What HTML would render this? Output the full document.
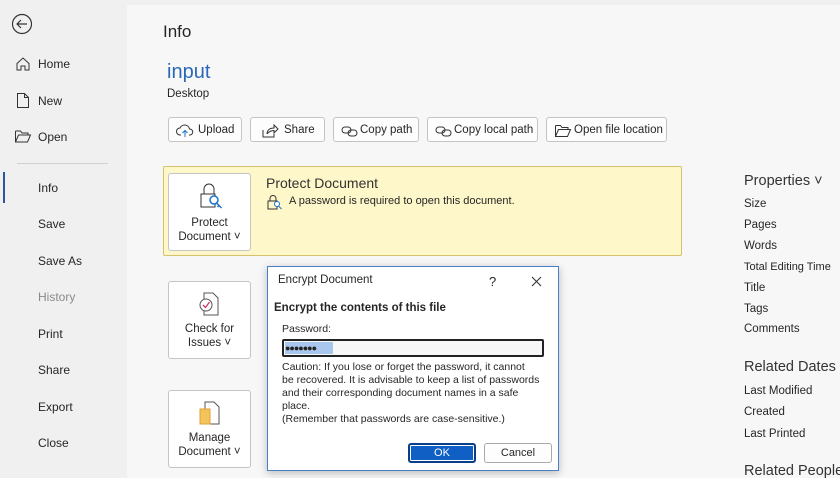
<!DOCTYPE html>
<html><head><meta charset="utf-8"><style>
*{margin:0;padding:0;box-sizing:border-box}
html{width:840px;height:478px;overflow:hidden}
body{width:840px;height:478px;overflow:hidden;background:#f0f0f0;font-family:"Liberation Sans",sans-serif;color:#262626;position:relative;font-size:12px}
.a{position:absolute;white-space:nowrap}
.main{position:absolute;left:127px;top:5px;width:713px;height:473px;background:#f7f7f7}
.nav{font-size:12px;color:#262626}
.btn{position:absolute;top:117px;height:25px;border:1px solid #c4c4c4;border-radius:3px;background:#fdfdfd;font-size:11.5px;line-height:25px;padding-left:29px;white-space:nowrap}
.btn svg{position:absolute;left:7px;top:5px}
.big{position:absolute;left:168px;width:83px;height:78px;border:1px solid #c4c4c4;border-radius:3px;background:#fff;text-align:center;font-size:11.5px;line-height:14.5px}
.prop{position:absolute;left:744px;font-size:11.5px;white-space:nowrap}
.h{position:absolute;left:744px;font-size:14.5px;color:#333;white-space:nowrap}
</style></head><body>
<svg class="a" style="left:11px;top:13px" width="22" height="22" viewBox="0 0 22 22"><circle cx="11" cy="11" r="9.5" fill="none" stroke="#333" stroke-width="1.2"/><path d="M16 11H6M10 7l-4 4 4 4" fill="none" stroke="#333" stroke-width="1.2"/></svg>
<svg class="a" style="left:15px;top:56px" width="16" height="16" viewBox="0 0 16 16"><path d="M2 7.5L8 2l6 5.5V14h-4V10H6v4H2z" fill="none" stroke="#333"/></svg>
<div class="a nav" style="left:38px;top:57px">Home</div>
<svg class="a" style="left:15px;top:92px" width="16" height="17" viewBox="0 0 16 17"><path d="M2.5 1.5h7l4 4v10h-11z M9.5 1.5v4h4" fill="none" stroke="#333"/></svg>
<div class="a nav" style="left:38px;top:94px">New</div>
<svg class="a" style="left:14px;top:129px" width="18" height="15" viewBox="0 0 18 15"><path d="M1.5 2h5l1.5 2h6v2M1.5 2v11h12l3-7h-12l-3 7" fill="none" stroke="#333"/></svg>
<div class="a nav" style="left:38px;top:130px">Open</div>
<div class="a" style="left:17px;top:163px;width:91px;height:1px;background:#d0d0d0"></div>
<div class="a" style="left:3px;top:172px;width:2px;height:31px;background:#2b579a"></div>
<div class="a nav" style="left:38px;top:181px">Info</div>
<div class="a nav" style="left:38px;top:217px">Save</div>
<div class="a nav" style="left:38px;top:254px">Save As</div>
<div class="a nav" style="left:38px;top:290px;color:#8a8a8a">History</div>
<div class="a nav" style="left:38px;top:327px">Print</div>
<div class="a nav" style="left:38px;top:363px">Share</div>
<div class="a nav" style="left:38px;top:400px">Export</div>
<div class="a nav" style="left:38px;top:436px">Close</div>

<div class="main"></div>
<div class="a" style="left:163px;top:22px;font-size:17px;color:#262626">Info</div>
<div class="a" style="left:167px;top:61px;font-size:20px;color:#2b66b7">input</div>
<div class="a" style="left:167px;top:88px;font-size:11.5px">Desktop</div>

<div class="btn" style="left:168px;width:74px"><svg width="18" height="16" viewBox="0 0 18 16"><path d="M5 12H4a3.5 3.5 0 010-7 5 5 0 019.5 1 3 3 0 01.5 6h-1" fill="none" stroke="#333"/><path d="M9 14V8M6.5 10L9 7.5 11.5 10" fill="none" stroke="#1a73c8"/></svg>Upload</div>
<div class="btn" style="left:250px;width:75px;padding-left:33px"><svg style="left:10px" width="18" height="16" viewBox="0 0 18 16"><path d="M2 7v7h11v-3M6 11c0-4 3-6 7-6V2l4 4-4 4V7.5c-3 0-5 1-7 3.5" fill="none" stroke="#333"/></svg>Share</div>
<div class="btn" style="left:333px;width:86px;padding-left:26px"><svg width="18" height="16" viewBox="0 0 18 16"><rect x="1" y="4" width="9" height="6" rx="3" fill="none" stroke="#333"/><rect x="7" y="7" width="9" height="6" rx="3" fill="none" stroke="#333"/></svg>Copy path</div>
<div class="btn" style="left:427px;width:111px;padding-left:26px"><svg width="18" height="16" viewBox="0 0 18 16"><rect x="1" y="4" width="9" height="6" rx="3" fill="none" stroke="#333"/><rect x="7" y="7" width="9" height="6" rx="3" fill="none" stroke="#333"/></svg>Copy local path</div>
<div class="btn" style="left:546px;width:121px;padding-left:27px"><svg width="18" height="16" viewBox="0 0 18 15"><path d="M1.5 2h5l1.5 2h6v2M1.5 2v11h12l3-7h-12l-3 7" fill="none" stroke="#333"/></svg>Open file location</div>

<div class="a" style="left:163px;top:166px;width:519px;height:90px;background:#fdf7c9;border:1px solid #d6c26c;border-radius:2px"></div>
<div class="big" style="top:173px"><svg style="margin-top:7px" width="30" height="30" viewBox="0 0 30 30"><path d="M9 13V8a5 5 0 0110 0v5" fill="none" stroke="#333"/><rect x="6" y="13" width="14" height="13" fill="#fff" stroke="#333"/><circle cx="19" cy="19" r="4" fill="#fff" stroke="#1a73c8" stroke-width="1.5"/><path d="M21.5 22l5 5M24 24.5l-1.5 1.5" stroke="#1a73c8" stroke-width="1.5"/></svg><div style="margin-top:0">Protect<br>Document ˅</div></div>
<div class="a" style="left:266px;top:175px;font-size:14px;color:#333">Protect Document</div>
<svg class="a" style="left:266px;top:194px" width="18" height="16" viewBox="0 0 18 16"><path d="M4 7V4.5a3 3 0 016 0V7" fill="none" stroke="#333"/><rect x="2" y="7" width="9" height="8" fill="none" stroke="#333"/><circle cx="11" cy="10" r="2.5" fill="#fff" stroke="#1a73c8"/><path d="M12.5 12l3 3" stroke="#1a73c8"/></svg>
<div class="a" style="left:289px;top:195px;font-size:11px">A password is required to open this document.</div>

<div class="big" style="top:281px"><svg style="margin-top:9px" width="26" height="26" viewBox="0 0 26 26"><path d="M7 2h9l5 5v17H7z" fill="#fff" stroke="#555"/><circle cx="9" cy="14" r="6" fill="#fff" stroke="#555"/><path d="M6 14l2.5 2.5L12.5 11" fill="none" stroke="#d13464" stroke-width="1.3"/></svg><div style="margin-top:0">Check for<br>Issues ˅</div></div>
<div class="big" style="top:390px"><svg style="margin-top:9px" width="26" height="26" viewBox="0 0 26 26"><path d="M8 2h9l5 5v17H8z" fill="#fff" stroke="#555"/><rect x="3" y="9" width="10" height="15" fill="#f3c35c" stroke="#e0a030"/></svg><div style="margin-top:0">Manage<br>Document ˅</div></div>

<div class="h" style="top:173px">Properties ˅</div>
<div class="prop" style="top:198px">Size</div>
<div class="prop" style="top:219px">Pages</div>
<div class="prop" style="top:240px">Words</div>
<div class="prop" style="top:261px;font-size:11px">Total Editing Time</div>
<div class="prop" style="top:282px">Title</div>
<div class="prop" style="top:303px">Tags</div>
<div class="prop" style="top:323px">Comments</div>
<div class="h" style="top:359px">Related Dates</div>
<div class="prop" style="top:385px">Last Modified</div>
<div class="prop" style="top:406px">Created</div>
<div class="prop" style="top:428px">Last Printed</div>
<div class="h" style="top:463px">Related People</div>

<div class="a" style="left:267px;top:266px;width:292px;height:205px;background:#fff;border:1px solid #4a7fc8;box-shadow:0 2px 8px rgba(0,0,0,.25)"></div>
<div class="a" style="left:278px;top:274px;font-size:11.5px">Encrypt Document</div>
<div class="a" style="left:489px;top:274px;font-size:13px">?</div>
<svg class="a" style="left:531px;top:276px" width="11" height="11" viewBox="0 0 11 11"><path d="M1 1l9 9M10 1l-9 9" stroke="#333" stroke-width="1.1"/></svg>
<div class="a" style="left:274px;top:302px;font-size:11.5px;font-weight:bold">Encrypt the contents of this file</div>
<div class="a" style="left:282px;top:323px;font-size:10.5px">Password:</div>
<div class="a" style="left:282px;top:339px;width:262px;height:18px;border:2px solid #222;border-radius:2px;background:#f7f7f7"></div>
<div class="a" style="left:285px;top:342px;width:48px;height:12px;background:#a9c7ee;font-size:9px;line-height:12px;letter-spacing:-1px;color:#222">●●●●●●●</div>
<div class="a" style="left:282px;top:361px;font-size:10.5px;line-height:13px">Caution: If you lose or forget the password, it cannot<br>be recovered. It is advisable to keep a list of passwords<br>and their corresponding document names in a safe<br>place.<br>(Remember that passwords are case-sensitive.)</div>
<div class="a" style="left:408px;top:443px;width:68px;height:20px;background:#0f5fc4;border:2px solid #0b3e8a;box-shadow:inset 0 0 0 1px #fff;border-radius:3px;color:#fff;text-align:center;line-height:16px;font-size:11px">OK</div>
<div class="a" style="left:484px;top:443px;width:68px;height:20px;background:#fdfdfd;border:1px solid #aaa;border-radius:3px;text-align:center;line-height:18px;font-size:11px">Cancel</div>
</body></html>
